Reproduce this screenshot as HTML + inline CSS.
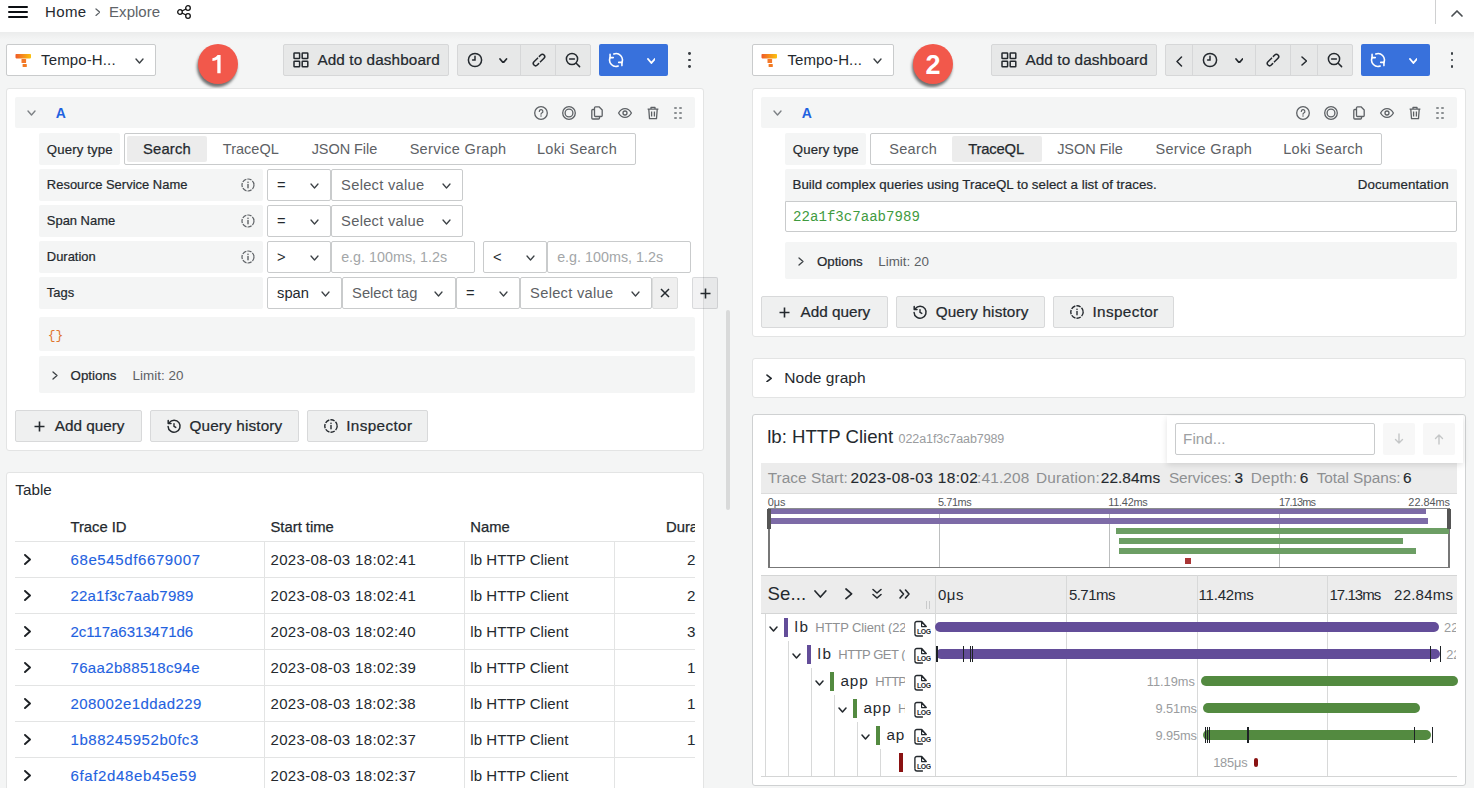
<!DOCTYPE html><html><head><meta charset="utf-8"><style>
html,body{margin:0;padding:0;}
body{width:1474px;height:788px;overflow:hidden;position:relative;background:#f4f5f5;font-family:"Liberation Sans",sans-serif;}
body>div,body>svg{position:absolute;box-sizing:border-box;white-space:nowrap;}
</style></head><body>
<div style="left:0px;top:0px;width:1474px;height:32px;background:#fff"></div>
<div style="left:0px;top:32px;width:1474px;height:8px;background:linear-gradient(rgba(0,0,0,0.035),rgba(0,0,0,0))"></div>
<div style="left:8px;top:6px;width:20px;height:2px;background:#0c0f13;border-radius:1px"></div>
<div style="left:8px;top:11px;width:20px;height:2px;background:#0c0f13;border-radius:1px"></div>
<div style="left:8px;top:16px;width:20px;height:2px;background:#0c0f13;border-radius:1px"></div>
<div style="top:4.16px;font:15px/1 'Liberation Sans',sans-serif;color:#24292e;letter-spacing:0.333px;left:45.10px;">Home</div>
<svg style="left:94.6px;top:7.800000000000001px;" width="5.8" height="8.4" viewBox="0 0 5.8 8.4" fill="none"><path d="M1 1 L4.8 4.2 L1 7.4" stroke="#5e6368" stroke-width="1.3" stroke-linecap="round" stroke-linejoin="round"/></svg>
<div style="top:4.16px;font:15px/1 'Liberation Sans',sans-serif;color:#5e6368;letter-spacing:0.021px;left:109.10px;">Explore</div>
<svg style="left:176px;top:4px;" width="16" height="16" viewBox="0 0 16 16" fill="none"><circle cx="4" cy="8" r="2.3" stroke="#111" stroke-width="1.3"/><circle cx="12" cy="4" r="2.3" stroke="#111" stroke-width="1.3"/><circle cx="12" cy="12" r="2.3" stroke="#111" stroke-width="1.3"/><path d="M6 7 L10 5 M6 9 L10 11" stroke="#111" stroke-width="1.3"/></svg>
<div style="left:1435px;top:0px;width:1px;height:24px;background:#cfd0d1"></div>
<svg style="left:1450px;top:8px;" width="14" height="10" viewBox="0 0 14 10" fill="none"><path d="M2 8 L7 3 L12 8" stroke="#4a4e52" stroke-width="1.7" stroke-linecap="round" stroke-linejoin="round"/></svg>
<div style="left:6px;top:44px;width:150px;height:32px;background:#fff;border:1px solid #c9cbcc;border-radius:2px"></div>
<svg style="left:15px;top:54px;" width="17" height="14" viewBox="0 0 17 14" fill="none"><defs><linearGradient id="tg" x1="0" x2="1"><stop offset="0" stop-color="#f05a28"/><stop offset="1" stop-color="#fbc20e"/></linearGradient></defs><rect x="0.5" y="0" width="15.5" height="4.4" rx="0.8" fill="url(#tg)"/><rect x="6.5" y="5" width="4.6" height="4" rx="0.6" fill="#f3782a"/><rect x="7.6" y="9.9" width="4.2" height="3.2" rx="0.6" fill="#f27a22"/></svg>
<div style="top:52.16px;font:15px/1 'Liberation Sans',sans-serif;color:#24292e;letter-spacing:0.122px;left:41.10px;">Tempo-H...</div>
<svg style="left:134.5px;top:58.0px;" width="9" height="6" viewBox="0 0 9 6" fill="none"><path d="M1 1 L4.5 5 L8 1" stroke="#3d4246" stroke-width="1.4" stroke-linecap="round" stroke-linejoin="round"/></svg>
<div style="left:198px;top:44px;width:40px;height:40px;background:#f2584b;border-radius:50%;box-shadow:-1px 3px 3px rgba(0,0,0,0.55)"></div>
<svg style="left:210px;top:54px;" width="16" height="20" viewBox="0 0 16 20" fill="none"><path d="M2.6 5.2 L8.2 1.6 H10.4 V19" stroke="#fff" stroke-width="0" fill="none"/><path d="M2.4 4.2 C5 3.6 6.6 2.6 7.6 1 H10.6 V19.2 H7.3 V5.6 C6 6.4 4.4 6.9 2.4 7.1 Z" fill="#fff"/></svg>
<div style="left:283px;top:44px;width:166px;height:32px;background:#e7e8e8;border:1px solid #d6d7d8;border-radius:2px"></div>
<svg style="left:292.5px;top:52px;" width="16" height="16" viewBox="0 0 16 16" fill="none"><rect x="1" y="1" width="5.6" height="5.6" rx="0.6" stroke="#24292e" stroke-width="1.5"/><rect x="1" y="9.2" width="5.6" height="5.6" rx="0.6" stroke="#24292e" stroke-width="1.5"/><rect x="9.2" y="1" width="5.6" height="5.6" rx="0.6" stroke="#24292e" stroke-width="1.5"/><rect x="9.2" y="9.2" width="5.6" height="5.6" rx="0.6" stroke="#24292e" stroke-width="1.5"/></svg>
<div style="top:52.26px;font:15.3px/1 'Liberation Sans',sans-serif;color:#24292e;letter-spacing:0.097px;-webkit-text-stroke:0.22px #24292e;left:317.48px;">Add to dashboard</div>
<div style="left:457px;top:44px;width:134px;height:32px;background:#e7e8e8;border:1px solid #d6d7d8;border-radius:2px"></div>
<div style="left:520px;top:45px;width:1px;height:30px;background:#d6d7d8"></div>
<div style="left:555px;top:45px;width:1px;height:30px;background:#d6d7d8"></div>
<svg style="left:467px;top:52px;" width="16" height="16" viewBox="0 0 16 16" fill="none"><circle cx="8" cy="8" r="6.6" stroke="#24292e" stroke-width="1.5"/><path d="M8 4.2 V8 H5.6" stroke="#24292e" stroke-width="1.5" stroke-linecap="round"/></svg>
<svg style="left:499.25px;top:57.6px;" width="8.5" height="5.8" viewBox="0 0 8.5 5.8" fill="none"><path d="M1 1 L4.25 4.8 L7.5 1" stroke="#24292e" stroke-width="1.7" stroke-linecap="round" stroke-linejoin="round"/></svg>
<svg style="left:530.5px;top:52px;" width="16" height="16" viewBox="0 0 16 16" fill="none"><g transform="rotate(-45 8 8)"><path d="M8.3 5.7 H3.2 a2.3 2.3 0 0 0 0 4.6 H5.2" stroke="#24292e" stroke-width="1.5" stroke-linecap="round"/><path d="M7.7 10.3 H12.8 a2.3 2.3 0 0 0 0 -4.6 H10.8" stroke="#24292e" stroke-width="1.5" stroke-linecap="round"/></g></svg>
<svg style="left:565px;top:52px;" width="16" height="16" viewBox="0 0 16 16" fill="none"><circle cx="7" cy="7" r="5.6" stroke="#24292e" stroke-width="1.5"/><path d="M4.6 7 H9.4 M11.2 11.2 L14.6 14.6" stroke="#24292e" stroke-width="1.5" stroke-linecap="round"/></svg>
<div style="left:599px;top:44px;width:69px;height:32px;background:#3871dc;border-radius:2px"></div>
<svg style="left:608px;top:52px;" width="16" height="16" viewBox="0 0 16 16" fill="none"><path d="M5.81 1.99 A6.4 6.4 0 0 1 13.93 10.4" stroke="#fff" stroke-width="1.6" stroke-linecap="round"/><path d="M10.19 14.01 A6.4 6.4 0 0 1 2.07 5.6" stroke="#fff" stroke-width="1.6" stroke-linecap="round"/><path d="M2.07 2.3999999999999995 V5.6 H5.27" stroke="#fff" stroke-width="1.6" stroke-linecap="round" stroke-linejoin="round"/><path d="M13.93 13.600000000000001 V10.4 H10.73" stroke="#fff" stroke-width="1.6" stroke-linecap="round" stroke-linejoin="round"/></svg>
<svg style="left:646.6px;top:57.5px;" width="8.8" height="6" viewBox="0 0 8.8 6" fill="none"><path d="M1 1 L4.4 5 L7.8 1" stroke="#fff" stroke-width="1.9" stroke-linecap="round" stroke-linejoin="round"/></svg>
<div style="left:688.1px;top:52.1px;width:2.8px;height:2.8px;background:#3a3f44;border-radius:50%"></div>
<div style="left:688.1px;top:58.6px;width:2.8px;height:2.8px;background:#3a3f44;border-radius:50%"></div>
<div style="left:688.1px;top:65.1px;width:2.8px;height:2.8px;background:#3a3f44;border-radius:50%"></div>
<div style="left:752px;top:44px;width:142px;height:32px;background:#fff;border:1px solid #c9cbcc;border-radius:2px"></div>
<svg style="left:761px;top:54px;" width="17" height="14" viewBox="0 0 17 14" fill="none"><defs><linearGradient id="tg" x1="0" x2="1"><stop offset="0" stop-color="#f05a28"/><stop offset="1" stop-color="#fbc20e"/></linearGradient></defs><rect x="0.5" y="0" width="15.5" height="4.4" rx="0.8" fill="url(#tg)"/><rect x="6.5" y="5" width="4.6" height="4" rx="0.6" fill="#f3782a"/><rect x="7.6" y="9.9" width="4.2" height="3.2" rx="0.6" fill="#f27a22"/></svg>
<div style="top:52.16px;font:15px/1 'Liberation Sans',sans-serif;color:#24292e;letter-spacing:0.122px;left:787.40px;">Tempo-H...</div>
<svg style="left:873.0px;top:58.0px;" width="9" height="6" viewBox="0 0 9 6" fill="none"><path d="M1 1 L4.5 5 L8 1" stroke="#3d4246" stroke-width="1.4" stroke-linecap="round" stroke-linejoin="round"/></svg>
<div style="left:913px;top:44px;width:40px;height:40px;background:#f2584b;border-radius:50%;box-shadow:-1px 3px 3px rgba(0,0,0,0.55)"></div>
<div style="top:51.79px;font:bold 27px/1 'Liberation Sans',sans-serif;color:#fff;left:925.38px;left:913px;width:40px;text-align:center;">2</div>
<div style="left:991px;top:44px;width:166px;height:32px;background:#e7e8e8;border:1px solid #d6d7d8;border-radius:2px"></div>
<svg style="left:1000.5px;top:52px;" width="16" height="16" viewBox="0 0 16 16" fill="none"><rect x="1" y="1" width="5.6" height="5.6" rx="0.6" stroke="#24292e" stroke-width="1.5"/><rect x="1" y="9.2" width="5.6" height="5.6" rx="0.6" stroke="#24292e" stroke-width="1.5"/><rect x="9.2" y="1" width="5.6" height="5.6" rx="0.6" stroke="#24292e" stroke-width="1.5"/><rect x="9.2" y="9.2" width="5.6" height="5.6" rx="0.6" stroke="#24292e" stroke-width="1.5"/></svg>
<div style="top:52.26px;font:15.3px/1 'Liberation Sans',sans-serif;color:#24292e;letter-spacing:0.097px;-webkit-text-stroke:0.22px #24292e;left:1025.48px;">Add to dashboard</div>
<div style="left:1165px;top:44px;width:188px;height:32px;background:#e7e8e8;border:1px solid #d6d7d8;border-radius:2px"></div>
<div style="left:1192px;top:45px;width:1px;height:30px;background:#d6d7d8"></div>
<div style="left:1255px;top:45px;width:1px;height:30px;background:#d6d7d8"></div>
<div style="left:1290px;top:45px;width:1px;height:30px;background:#d6d7d8"></div>
<div style="left:1317px;top:45px;width:1px;height:30px;background:#d6d7d8"></div>
<svg style="left:1176.3px;top:55.5px;" width="7" height="11" viewBox="0 0 7 11" fill="none"><path d="M5.5 1 L1 5.5 L5.5 10" stroke="#24292e" stroke-width="1.5" stroke-linecap="round" stroke-linejoin="round"/></svg>
<svg style="left:1202px;top:52px;" width="16" height="16" viewBox="0 0 16 16" fill="none"><circle cx="8" cy="8" r="6.6" stroke="#24292e" stroke-width="1.5"/><path d="M8 4.2 V8 H5.6" stroke="#24292e" stroke-width="1.5" stroke-linecap="round"/></svg>
<svg style="left:1234.75px;top:57.6px;" width="8.5" height="5.8" viewBox="0 0 8.5 5.8" fill="none"><path d="M1 1 L4.25 4.8 L7.5 1" stroke="#24292e" stroke-width="1.7" stroke-linecap="round" stroke-linejoin="round"/></svg>
<svg style="left:1265px;top:52px;" width="16" height="16" viewBox="0 0 16 16" fill="none"><g transform="rotate(-45 8 8)"><path d="M8.3 5.7 H3.2 a2.3 2.3 0 0 0 0 4.6 H5.2" stroke="#24292e" stroke-width="1.5" stroke-linecap="round"/><path d="M7.7 10.3 H12.8 a2.3 2.3 0 0 0 0 -4.6 H10.8" stroke="#24292e" stroke-width="1.5" stroke-linecap="round"/></g></svg>
<svg style="left:1300.55px;top:55.5px;" width="6.5" height="10" viewBox="0 0 6.5 10" fill="none"><path d="M1 1 L5.5 5.0 L1 9" stroke="#24292e" stroke-width="1.5" stroke-linecap="round" stroke-linejoin="round"/></svg>
<svg style="left:1327px;top:52px;" width="16" height="16" viewBox="0 0 16 16" fill="none"><circle cx="7" cy="7" r="5.6" stroke="#24292e" stroke-width="1.5"/><path d="M4.6 7 H9.4 M11.2 11.2 L14.6 14.6" stroke="#24292e" stroke-width="1.5" stroke-linecap="round"/></svg>
<div style="left:1361px;top:44px;width:69px;height:32px;background:#3871dc;border-radius:2px"></div>
<svg style="left:1370px;top:52px;" width="16" height="16" viewBox="0 0 16 16" fill="none"><path d="M5.81 1.99 A6.4 6.4 0 0 1 13.93 10.4" stroke="#fff" stroke-width="1.6" stroke-linecap="round"/><path d="M10.19 14.01 A6.4 6.4 0 0 1 2.07 5.6" stroke="#fff" stroke-width="1.6" stroke-linecap="round"/><path d="M2.07 2.3999999999999995 V5.6 H5.27" stroke="#fff" stroke-width="1.6" stroke-linecap="round" stroke-linejoin="round"/><path d="M13.93 13.600000000000001 V10.4 H10.73" stroke="#fff" stroke-width="1.6" stroke-linecap="round" stroke-linejoin="round"/></svg>
<svg style="left:1408.6px;top:57.5px;" width="8.8" height="6" viewBox="0 0 8.8 6" fill="none"><path d="M1 1 L4.4 5 L7.8 1" stroke="#fff" stroke-width="1.9" stroke-linecap="round" stroke-linejoin="round"/></svg>
<div style="left:1450.6px;top:52.1px;width:2.8px;height:2.8px;background:#3a3f44;border-radius:50%"></div>
<div style="left:1450.6px;top:58.6px;width:2.8px;height:2.8px;background:#3a3f44;border-radius:50%"></div>
<div style="left:1450.6px;top:65.1px;width:2.8px;height:2.8px;background:#3a3f44;border-radius:50%"></div>
<div style="left:6px;top:88px;width:698px;height:363px;background:#fff;border:1px solid #e3e4e4;border-radius:3px"></div>
<div style="left:15px;top:97px;width:680px;height:31px;background:#f4f5f5;border-radius:2px"></div>
<svg style="left:26.7px;top:110.2px;" width="9" height="6" viewBox="0 0 9 6" fill="none"><path d="M1 1 L4.5 5 L8 1" stroke="#7d8185" stroke-width="1.4" stroke-linecap="round" stroke-linejoin="round"/></svg>
<div style="top:105.82px;font:bold 14px/1 'Liberation Sans',sans-serif;color:#1f62e0;left:55.66px;">A</div>
<svg style="left:533px;top:105px;" width="16" height="16" viewBox="0 0 16 16" fill="none"><circle cx="8" cy="8" r="6.3" stroke="#5d6165" stroke-width="1.3"/><path d="M6.3 6.4 a1.8 1.8 0 1 1 2.5 1.6 c-0.6 0.3 -0.8 0.6 -0.8 1.2" stroke="#5d6165" stroke-width="1.2" stroke-linecap="round"/><circle cx="8" cy="11" r="0.75" fill="#5d6165"/></svg>
<svg style="left:561px;top:105px;" width="16" height="16" viewBox="0 0 16 16" fill="none"><circle cx="8" cy="8" r="6.3" stroke="#5d6165" stroke-width="1.3"/><circle cx="8" cy="8" r="3.9" stroke="#5d6165" stroke-width="1.3"/></svg>
<svg style="left:589px;top:105px;" width="16" height="16" viewBox="0 0 16 16" fill="none"><path d="M5.5 4.5 H3.8 a1 1 0 0 0 -1 1 V13 a1 1 0 0 0 1 1 H9.5 a1 1 0 0 0 1 -1 V11.5" stroke="#5d6165" stroke-width="1.3" stroke-linejoin="round"/><path d="M5.5 2.8 a1 1 0 0 1 1 -1 H10 L13.2 5 V10.5 a1 1 0 0 1 -1 1 H6.5 a1 1 0 0 1 -1 -1 Z" stroke="#5d6165" stroke-width="1.3" stroke-linejoin="round"/></svg>
<svg style="left:617px;top:105px;" width="16" height="16" viewBox="0 0 16 16" fill="none"><path d="M1.6 8 C3.4 4.6 5.6 3.6 8 3.6 C10.4 3.6 12.6 4.6 14.4 8 C12.6 11.4 10.4 12.4 8 12.4 C5.6 12.4 3.4 11.4 1.6 8 Z" stroke="#5d6165" stroke-width="1.3"/><circle cx="8" cy="8" r="2" stroke="#5d6165" stroke-width="1.3"/></svg>
<svg style="left:645px;top:105px;" width="16" height="16" viewBox="0 0 16 16" fill="none"><path d="M2.6 4.2 H13.4 M6 4 V2.4 H10 V4 M3.8 4.4 L4.5 13.6 H11.5 L12.2 4.4 M6.6 6.6 V11.6 M9.4 6.6 V11.6" stroke="#5d6165" stroke-width="1.3" stroke-linejoin="round"/></svg>
<div style="left:674.0px;top:106.6px;width:2.8px;height:2.8px;background:#8a8e91;border-radius:50%"></div>
<div style="left:674.0px;top:111.6px;width:2.8px;height:2.8px;background:#8a8e91;border-radius:50%"></div>
<div style="left:674.0px;top:116.6px;width:2.8px;height:2.8px;background:#8a8e91;border-radius:50%"></div>
<div style="left:679.2px;top:106.6px;width:2.8px;height:2.8px;background:#8a8e91;border-radius:50%"></div>
<div style="left:679.2px;top:111.6px;width:2.8px;height:2.8px;background:#8a8e91;border-radius:50%"></div>
<div style="left:679.2px;top:116.6px;width:2.8px;height:2.8px;background:#8a8e91;border-radius:50%"></div>
<div style="left:39px;top:133px;width:81px;height:32px;background:#f4f5f5;border-radius:2px"></div>
<div style="top:142.54px;font:13.2px/1 'Liberation Sans',sans-serif;color:#24292e;letter-spacing:0.136px;-webkit-text-stroke:0.22px #24292e;left:46.81px;">Query type</div>
<div style="left:124px;top:133px;width:512px;height:32px;background:#fff;border:1px solid #c9cbcc;border-radius:2px"></div>
<div style="left:127px;top:136px;width:80px;height:26px;background:#ececec;border-radius:2px"></div>
<div style="top:142.09px;font:14.8px/1 'Liberation Sans',sans-serif;color:#24292e;letter-spacing:0.14px;-webkit-text-stroke:0.25px #24292e;left:143.11px;">Search</div>
<div style="top:141.99px;font:14.5px/1 'Liberation Sans',sans-serif;color:#5d6165;letter-spacing:0.017px;left:222.83px;">TraceQL</div>
<div style="top:141.99px;font:14.5px/1 'Liberation Sans',sans-serif;color:#5d6165;letter-spacing:-0.053px;left:311.63px;">JSON File</div>
<div style="top:141.99px;font:14.5px/1 'Liberation Sans',sans-serif;color:#5d6165;letter-spacing:0.317px;left:409.63px;">Service Graph</div>
<div style="top:141.99px;font:14.5px/1 'Liberation Sans',sans-serif;color:#5d6165;letter-spacing:0.322px;left:536.93px;">Loki Search</div>
<div style="left:39px;top:169px;width:224px;height:32px;background:#f4f5f5;border-radius:2px"></div>
<div style="top:179.45px;font:12.95px/1 'Liberation Sans',sans-serif;color:#24292e;letter-spacing:0.021px;-webkit-text-stroke:0.22px #24292e;left:46.82px;">Resource Service Name</div>
<svg style="left:240px;top:177.0px;" width="16" height="16" viewBox="0 0 16 16" fill="none"><circle cx="8" cy="8" r="6" stroke="#5d6165" stroke-width="1.2" stroke-dasharray="4.306285714285714 1.0765714285714285"/><path d="M8 7.4 V10.8" stroke="#5d6165" stroke-width="1.4" stroke-linecap="round"/><circle cx="8" cy="5.3" r="0.8" fill="#5d6165"/></svg>
<div style="left:39px;top:205px;width:224px;height:32px;background:#f4f5f5;border-radius:2px"></div>
<div style="top:215.45px;font:12.95px/1 'Liberation Sans',sans-serif;color:#24292e;-webkit-text-stroke:0.22px #24292e;left:46.82px;">Span Name</div>
<svg style="left:240px;top:213.0px;" width="16" height="16" viewBox="0 0 16 16" fill="none"><circle cx="8" cy="8" r="6" stroke="#5d6165" stroke-width="1.2" stroke-dasharray="4.306285714285714 1.0765714285714285"/><path d="M8 7.4 V10.8" stroke="#5d6165" stroke-width="1.4" stroke-linecap="round"/><circle cx="8" cy="5.3" r="0.8" fill="#5d6165"/></svg>
<div style="left:39px;top:241px;width:224px;height:32px;background:#f4f5f5;border-radius:2px"></div>
<div style="top:251.45px;font:12.95px/1 'Liberation Sans',sans-serif;color:#24292e;-webkit-text-stroke:0.22px #24292e;left:46.82px;">Duration</div>
<svg style="left:240px;top:249.0px;" width="16" height="16" viewBox="0 0 16 16" fill="none"><circle cx="8" cy="8" r="6" stroke="#5d6165" stroke-width="1.2" stroke-dasharray="4.306285714285714 1.0765714285714285"/><path d="M8 7.4 V10.8" stroke="#5d6165" stroke-width="1.4" stroke-linecap="round"/><circle cx="8" cy="5.3" r="0.8" fill="#5d6165"/></svg>
<div style="left:39px;top:277px;width:224px;height:32px;background:#f4f5f5;border-radius:2px"></div>
<div style="top:287.45px;font:12.95px/1 'Liberation Sans',sans-serif;color:#24292e;-webkit-text-stroke:0.22px #24292e;left:46.82px;">Tags</div>
<div style="left:267px;top:169px;width:64px;height:32px;background:#fff;border:1px solid #c9cbcc;border-radius:2px"></div>
<div style="top:178.06px;font:14.7px/1 'Liberation Sans',sans-serif;color:#24292e;left:277.12px;">=</div>
<svg style="left:309.7px;top:182.5px;" width="9" height="6" viewBox="0 0 9 6" fill="none"><path d="M1 1 L4.5 5 L8 1" stroke="#3d4246" stroke-width="1.3" stroke-linecap="round" stroke-linejoin="round"/></svg>
<div style="left:331px;top:169px;width:132px;height:32px;background:#fff;border:1px solid #c9cbcc;border-radius:2px"></div>
<div style="top:178.06px;font:14.7px/1 'Liberation Sans',sans-serif;color:#5d6165;letter-spacing:0.277px;left:341.12px;">Select value</div>
<svg style="left:441.5px;top:182.5px;" width="9" height="6" viewBox="0 0 9 6" fill="none"><path d="M1 1 L4.5 5 L8 1" stroke="#3d4246" stroke-width="1.3" stroke-linecap="round" stroke-linejoin="round"/></svg>
<div style="left:267px;top:205px;width:64px;height:32px;background:#fff;border:1px solid #c9cbcc;border-radius:2px"></div>
<div style="top:214.06px;font:14.7px/1 'Liberation Sans',sans-serif;color:#24292e;left:277.12px;">=</div>
<svg style="left:309.7px;top:218.5px;" width="9" height="6" viewBox="0 0 9 6" fill="none"><path d="M1 1 L4.5 5 L8 1" stroke="#3d4246" stroke-width="1.3" stroke-linecap="round" stroke-linejoin="round"/></svg>
<div style="left:331px;top:205px;width:132px;height:32px;background:#fff;border:1px solid #c9cbcc;border-radius:2px"></div>
<div style="top:214.06px;font:14.7px/1 'Liberation Sans',sans-serif;color:#5d6165;letter-spacing:0.277px;left:341.12px;">Select value</div>
<svg style="left:441.5px;top:218.5px;" width="9" height="6" viewBox="0 0 9 6" fill="none"><path d="M1 1 L4.5 5 L8 1" stroke="#3d4246" stroke-width="1.3" stroke-linecap="round" stroke-linejoin="round"/></svg>
<div style="left:267px;top:241px;width:64px;height:32px;background:#fff;border:1px solid #c9cbcc;border-radius:2px"></div>
<div style="top:250.06px;font:14.7px/1 'Liberation Sans',sans-serif;color:#24292e;left:277.12px;">&gt;</div>
<svg style="left:309.7px;top:254.5px;" width="9" height="6" viewBox="0 0 9 6" fill="none"><path d="M1 1 L4.5 5 L8 1" stroke="#3d4246" stroke-width="1.3" stroke-linecap="round" stroke-linejoin="round"/></svg>
<div style="left:331px;top:241px;width:144px;height:32px;background:#fff;border:1px solid #c9cbcc;border-radius:2px"></div>
<div style="top:249.92px;font:14.3px/1 'Liberation Sans',sans-serif;color:#a3a6a8;letter-spacing:0.025px;left:341.14px;">e.g. 100ms, 1.2s</div>
<div style="left:483px;top:241px;width:64px;height:32px;background:#fff;border:1px solid #c9cbcc;border-radius:2px"></div>
<div style="top:250.06px;font:14.7px/1 'Liberation Sans',sans-serif;color:#24292e;left:493.12px;">&lt;</div>
<svg style="left:525.5px;top:254.5px;" width="9" height="6" viewBox="0 0 9 6" fill="none"><path d="M1 1 L4.5 5 L8 1" stroke="#3d4246" stroke-width="1.3" stroke-linecap="round" stroke-linejoin="round"/></svg>
<div style="left:547px;top:241px;width:144px;height:32px;background:#fff;border:1px solid #c9cbcc;border-radius:2px"></div>
<div style="top:249.92px;font:14.3px/1 'Liberation Sans',sans-serif;color:#a3a6a8;letter-spacing:0.025px;left:557.14px;">e.g. 100ms, 1.2s</div>
<div style="left:267px;top:277px;width:75px;height:32px;background:#fff;border:1px solid #c9cbcc;border-radius:2px"></div>
<div style="top:286.06px;font:14.7px/1 'Liberation Sans',sans-serif;color:#24292e;left:277.12px;">span</div>
<svg style="left:320.5px;top:290.5px;" width="9" height="6" viewBox="0 0 9 6" fill="none"><path d="M1 1 L4.5 5 L8 1" stroke="#3d4246" stroke-width="1.3" stroke-linecap="round" stroke-linejoin="round"/></svg>
<div style="left:342px;top:277px;width:114px;height:32px;background:#fff;border:1px solid #c9cbcc;border-radius:2px"></div>
<div style="top:286.06px;font:14.7px/1 'Liberation Sans',sans-serif;color:#5d6165;left:352.12px;">Select tag</div>
<svg style="left:434.0px;top:290.5px;" width="9" height="6" viewBox="0 0 9 6" fill="none"><path d="M1 1 L4.5 5 L8 1" stroke="#3d4246" stroke-width="1.3" stroke-linecap="round" stroke-linejoin="round"/></svg>
<div style="left:456px;top:277px;width:64px;height:32px;background:#fff;border:1px solid #c9cbcc;border-radius:2px"></div>
<div style="top:286.06px;font:14.7px/1 'Liberation Sans',sans-serif;color:#24292e;left:466.12px;">=</div>
<svg style="left:498.5px;top:290.5px;" width="9" height="6" viewBox="0 0 9 6" fill="none"><path d="M1 1 L4.5 5 L8 1" stroke="#3d4246" stroke-width="1.3" stroke-linecap="round" stroke-linejoin="round"/></svg>
<div style="left:520px;top:277px;width:132px;height:32px;background:#fff;border:1px solid #c9cbcc;border-radius:2px"></div>
<div style="top:286.06px;font:14.7px/1 'Liberation Sans',sans-serif;color:#5d6165;letter-spacing:0.277px;left:530.12px;">Select value</div>
<svg style="left:630.5px;top:290.5px;" width="9" height="6" viewBox="0 0 9 6" fill="none"><path d="M1 1 L4.5 5 L8 1" stroke="#3d4246" stroke-width="1.3" stroke-linecap="round" stroke-linejoin="round"/></svg>
<div style="left:652px;top:277px;width:26px;height:32px;background:#efefef;border:1px solid #dcdddd;border-radius:2px"></div>
<svg style="left:659px;top:287px;" width="12" height="12" viewBox="0 0 12 12" fill="none"><path d="M2 2 L10 10 M10 2 L2 10" stroke="#24292e" stroke-width="1.5"/></svg>
<div style="left:692px;top:277px;width:26px;height:32px;background:rgba(36,41,46,0.06);border:1px solid rgba(36,41,46,0.12);border-radius:2px"></div>
<svg style="left:699.5px;top:287.5px;" width="11" height="11" viewBox="0 0 11 11" fill="none"><path d="M5.5 0.5 V10.5 M0.5 5.5 H10.5" stroke="#24292e" stroke-width="1.6"/></svg>
<div style="left:39px;top:317px;width:656px;height:34px;background:#f4f5f5;border-radius:2px"></div>
<div style="top:329.29px;font:13px/1 'Liberation Mono',monospace;color:#e0752d;left:47.72px;">{}</div>
<div style="left:39px;top:356px;width:656px;height:37px;background:#f4f5f5;border-radius:2px"></div>
<svg style="left:51.8px;top:371.2px;" width="6" height="9" viewBox="0 0 6 9" fill="none"><path d="M1 1 L5 4.5 L1 8" stroke="#3d4246" stroke-width="1.3" stroke-linecap="round" stroke-linejoin="round"/></svg>
<div style="top:369.08px;font:13.3px/1 'Liberation Sans',sans-serif;color:#24292e;letter-spacing:0.004px;-webkit-text-stroke:0.22px #24292e;left:70.60px;">Options</div>
<div style="top:369.11px;font:13.4px/1 'Liberation Sans',sans-serif;color:#5d6165;letter-spacing:0.028px;left:132.50px;">Limit: 20</div>
<div style="left:15px;top:410px;width:127px;height:32px;background:#eff0f0;border:1px solid #d8d9da;border-radius:2px"></div>
<svg style="left:33.7px;top:420.5px;" width="11" height="11" viewBox="0 0 11 11" fill="none"><path d="M5.5 0.5 V10.5 M0.5 5.5 H10.5" stroke="#24292e" stroke-width="1.6"/></svg>
<div style="top:418.26px;font:15.3px/1 'Liberation Sans',sans-serif;color:#24292e;letter-spacing:0.003px;-webkit-text-stroke:0.22px #24292e;left:54.68px;">Add query</div>
<div style="left:150px;top:410px;width:149px;height:32px;background:#eff0f0;border:1px solid #d8d9da;border-radius:2px"></div>
<svg style="left:166px;top:418px;" width="16" height="16" viewBox="0 0 16 16" fill="none"><path d="M3.3 4.6 A6 6 0 1 1 2.1 8.4" stroke="#24292e" stroke-width="1.5" stroke-linecap="round"/><path d="M2.2 2.6 V5.4 H5" stroke="#24292e" stroke-width="1.5" stroke-linecap="round" stroke-linejoin="round"/><path d="M8 5.6 V8.3 L9.8 9.4" stroke="#24292e" stroke-width="1.4" stroke-linecap="round"/></svg>
<div style="top:418.26px;font:15.3px/1 'Liberation Sans',sans-serif;color:#24292e;letter-spacing:0.146px;-webkit-text-stroke:0.22px #24292e;left:189.48px;">Query history</div>
<div style="left:307px;top:410px;width:121px;height:32px;background:#eff0f0;border:1px solid #d8d9da;border-radius:2px"></div>
<svg style="left:322.6px;top:418px;" width="16" height="16" viewBox="0 0 16 16" fill="none"><circle cx="8" cy="8" r="6.2" stroke="#24292e" stroke-width="1.4" stroke-dasharray="4.449828571428571 1.1124571428571428"/><path d="M8 7.4 V10.8" stroke="#24292e" stroke-width="1.4" stroke-linecap="round"/><circle cx="8" cy="5.3" r="0.8" fill="#24292e"/></svg>
<div style="top:418.26px;font:15.3px/1 'Liberation Sans',sans-serif;color:#24292e;letter-spacing:0.35px;-webkit-text-stroke:0.22px #24292e;left:346.28px;">Inspector</div>
<div style="left:6px;top:472px;width:698px;height:340px;background:#fff;border:1px solid #e3e4e4;border-radius:3px"></div>
<div style="top:481.53px;font:15.2px/1 'Liberation Sans',sans-serif;color:#24292e;letter-spacing:0.05px;left:15.29px;">Table</div>
<div style="top:519.89px;font:14.8px/1 'Liberation Sans',sans-serif;color:#24292e;letter-spacing:-0.029px;-webkit-text-stroke:0.25px #24292e;left:70.51px;">Trace ID</div>
<div style="top:519.89px;font:14.8px/1 'Liberation Sans',sans-serif;color:#24292e;-webkit-text-stroke:0.25px #24292e;left:270.51px;">Start time</div>
<div style="top:519.89px;font:14.8px/1 'Liberation Sans',sans-serif;color:#24292e;-webkit-text-stroke:0.25px #24292e;left:470.31px;">Name</div>
<div style="top:519.89px;font:14.8px/1 'Liberation Sans',sans-serif;color:#24292e;-webkit-text-stroke:0.25px #24292e;left:-0.89px;left:666px;width:29px;overflow:hidden;">Dura</div>
<div style="left:15px;top:541px;width:680px;height:1px;background:#e3e4e4"></div>
<div style="left:264px;top:541px;width:1px;height:260px;background:#e3e4e4"></div>
<div style="left:464px;top:541px;width:1px;height:260px;background:#e3e4e4"></div>
<div style="left:614px;top:541px;width:1px;height:260px;background:#e3e4e4"></div>
<div style="left:15px;top:577px;width:680px;height:1px;background:#e3e4e4"></div>
<svg style="left:23.6px;top:554.0px;" width="7" height="11" viewBox="0 0 7 11" fill="none"><path d="M1 1 L6 5.5 L1 10" stroke="#1d2125" stroke-width="1.9" stroke-linecap="round" stroke-linejoin="round"/></svg>
<div style="top:551.66px;font:15px/1 'Liberation Sans',sans-serif;color:#1f62e0;letter-spacing:0.616px;-webkit-text-stroke:0.12px #1f62e0;left:70.50px;">68e545df6679007</div>
<div style="top:551.66px;font:15.0px/1 'Liberation Sans',sans-serif;color:#24292e;letter-spacing:0.331px;left:270.50px;">2023-08-03 18:02:41</div>
<div style="top:551.66px;font:15px/1 'Liberation Sans',sans-serif;color:#24292e;letter-spacing:0.06px;left:470.30px;">lb HTTP Client</div>
<div style="top:551.73px;font:15.2px/1 'Liberation Sans',sans-serif;color:#24292e;left:95.5px;width:600px;text-align:right;">2</div>
<div style="left:15px;top:613px;width:680px;height:1px;background:#e3e4e4"></div>
<svg style="left:23.6px;top:590.0px;" width="7" height="11" viewBox="0 0 7 11" fill="none"><path d="M1 1 L6 5.5 L1 10" stroke="#1d2125" stroke-width="1.9" stroke-linecap="round" stroke-linejoin="round"/></svg>
<div style="top:587.66px;font:15px/1 'Liberation Sans',sans-serif;color:#1f62e0;letter-spacing:0.193px;-webkit-text-stroke:0.12px #1f62e0;left:70.50px;">22a1f3c7aab7989</div>
<div style="top:587.66px;font:15.0px/1 'Liberation Sans',sans-serif;color:#24292e;letter-spacing:0.331px;left:270.50px;">2023-08-03 18:02:41</div>
<div style="top:587.66px;font:15px/1 'Liberation Sans',sans-serif;color:#24292e;letter-spacing:0.06px;left:470.30px;">lb HTTP Client</div>
<div style="top:587.73px;font:15.2px/1 'Liberation Sans',sans-serif;color:#24292e;left:95.5px;width:600px;text-align:right;">2</div>
<div style="left:15px;top:649px;width:680px;height:1px;background:#e3e4e4"></div>
<svg style="left:23.6px;top:626.0px;" width="7" height="11" viewBox="0 0 7 11" fill="none"><path d="M1 1 L6 5.5 L1 10" stroke="#1d2125" stroke-width="1.9" stroke-linecap="round" stroke-linejoin="round"/></svg>
<div style="top:623.66px;font:15px/1 'Liberation Sans',sans-serif;color:#1f62e0;letter-spacing:-0.039px;-webkit-text-stroke:0.12px #1f62e0;left:70.50px;">2c117a6313471d6</div>
<div style="top:623.66px;font:15.0px/1 'Liberation Sans',sans-serif;color:#24292e;letter-spacing:0.324px;left:270.50px;">2023-08-03 18:02:40</div>
<div style="top:623.66px;font:15px/1 'Liberation Sans',sans-serif;color:#24292e;letter-spacing:0.06px;left:470.30px;">lb HTTP Client</div>
<div style="top:623.73px;font:15.2px/1 'Liberation Sans',sans-serif;color:#24292e;left:95.5px;width:600px;text-align:right;">3</div>
<div style="left:15px;top:685px;width:680px;height:1px;background:#e3e4e4"></div>
<svg style="left:23.6px;top:662.0px;" width="7" height="11" viewBox="0 0 7 11" fill="none"><path d="M1 1 L6 5.5 L1 10" stroke="#1d2125" stroke-width="1.9" stroke-linecap="round" stroke-linejoin="round"/></svg>
<div style="top:659.66px;font:15px/1 'Liberation Sans',sans-serif;color:#1f62e0;letter-spacing:0.338px;-webkit-text-stroke:0.12px #1f62e0;left:70.50px;">76aa2b88518c94e</div>
<div style="top:659.66px;font:15.0px/1 'Liberation Sans',sans-serif;color:#24292e;letter-spacing:0.331px;left:270.50px;">2023-08-03 18:02:39</div>
<div style="top:659.66px;font:15px/1 'Liberation Sans',sans-serif;color:#24292e;letter-spacing:0.06px;left:470.30px;">lb HTTP Client</div>
<div style="top:659.73px;font:15.2px/1 'Liberation Sans',sans-serif;color:#24292e;left:95.5px;width:600px;text-align:right;">1</div>
<div style="left:15px;top:721px;width:680px;height:1px;background:#e3e4e4"></div>
<svg style="left:23.6px;top:698.0px;" width="7" height="11" viewBox="0 0 7 11" fill="none"><path d="M1 1 L6 5.5 L1 10" stroke="#1d2125" stroke-width="1.9" stroke-linecap="round" stroke-linejoin="round"/></svg>
<div style="top:695.66px;font:15px/1 'Liberation Sans',sans-serif;color:#1f62e0;letter-spacing:0.414px;-webkit-text-stroke:0.12px #1f62e0;left:70.50px;">208002e1ddad229</div>
<div style="top:695.66px;font:15.0px/1 'Liberation Sans',sans-serif;color:#24292e;letter-spacing:0.324px;left:270.50px;">2023-08-03 18:02:38</div>
<div style="top:695.66px;font:15px/1 'Liberation Sans',sans-serif;color:#24292e;letter-spacing:0.06px;left:470.30px;">lb HTTP Client</div>
<div style="top:695.73px;font:15.2px/1 'Liberation Sans',sans-serif;color:#24292e;left:95.5px;width:600px;text-align:right;">1</div>
<div style="left:15px;top:757px;width:680px;height:1px;background:#e3e4e4"></div>
<svg style="left:23.6px;top:734.0px;" width="7" height="11" viewBox="0 0 7 11" fill="none"><path d="M1 1 L6 5.5 L1 10" stroke="#1d2125" stroke-width="1.9" stroke-linecap="round" stroke-linejoin="round"/></svg>
<div style="top:731.66px;font:15px/1 'Liberation Sans',sans-serif;color:#1f62e0;letter-spacing:0.546px;-webkit-text-stroke:0.12px #1f62e0;left:70.50px;">1b88245952b0fc3</div>
<div style="top:731.66px;font:15.0px/1 'Liberation Sans',sans-serif;color:#24292e;letter-spacing:0.331px;left:270.50px;">2023-08-03 18:02:37</div>
<div style="top:731.66px;font:15px/1 'Liberation Sans',sans-serif;color:#24292e;letter-spacing:0.06px;left:470.30px;">lb HTTP Client</div>
<div style="top:731.73px;font:15.2px/1 'Liberation Sans',sans-serif;color:#24292e;left:95.5px;width:600px;text-align:right;">1</div>
<div style="left:15px;top:793px;width:680px;height:1px;background:#e3e4e4"></div>
<svg style="left:23.6px;top:770.0px;" width="7" height="11" viewBox="0 0 7 11" fill="none"><path d="M1 1 L6 5.5 L1 10" stroke="#1d2125" stroke-width="1.9" stroke-linecap="round" stroke-linejoin="round"/></svg>
<div style="top:767.66px;font:15px/1 'Liberation Sans',sans-serif;color:#1f62e0;letter-spacing:0.639px;-webkit-text-stroke:0.12px #1f62e0;left:70.50px;">6faf2d48eb45e59</div>
<div style="top:767.66px;font:15.0px/1 'Liberation Sans',sans-serif;color:#24292e;letter-spacing:0.331px;left:270.50px;">2023-08-03 18:02:37</div>
<div style="top:767.66px;font:15px/1 'Liberation Sans',sans-serif;color:#24292e;letter-spacing:0.06px;left:470.30px;">lb HTTP Client</div>
<div style="left:726px;top:310px;width:4px;height:200px;background:#d9dada;border-radius:2px"></div>
<div style="left:752px;top:88px;width:714px;height:249px;background:#fff;border:1px solid #e3e4e4;border-radius:3px"></div>
<div style="left:761px;top:97px;width:696px;height:31px;background:#f4f5f5;border-radius:2px"></div>
<svg style="left:772.7px;top:110.2px;" width="9" height="6" viewBox="0 0 9 6" fill="none"><path d="M1 1 L4.5 5 L8 1" stroke="#7d8185" stroke-width="1.4" stroke-linecap="round" stroke-linejoin="round"/></svg>
<div style="top:105.82px;font:bold 14px/1 'Liberation Sans',sans-serif;color:#1f62e0;left:801.66px;">A</div>
<svg style="left:1295px;top:105px;" width="16" height="16" viewBox="0 0 16 16" fill="none"><circle cx="8" cy="8" r="6.3" stroke="#5d6165" stroke-width="1.3"/><path d="M6.3 6.4 a1.8 1.8 0 1 1 2.5 1.6 c-0.6 0.3 -0.8 0.6 -0.8 1.2" stroke="#5d6165" stroke-width="1.2" stroke-linecap="round"/><circle cx="8" cy="11" r="0.75" fill="#5d6165"/></svg>
<svg style="left:1323px;top:105px;" width="16" height="16" viewBox="0 0 16 16" fill="none"><circle cx="8" cy="8" r="6.3" stroke="#5d6165" stroke-width="1.3"/><circle cx="8" cy="8" r="3.9" stroke="#5d6165" stroke-width="1.3"/></svg>
<svg style="left:1351px;top:105px;" width="16" height="16" viewBox="0 0 16 16" fill="none"><path d="M5.5 4.5 H3.8 a1 1 0 0 0 -1 1 V13 a1 1 0 0 0 1 1 H9.5 a1 1 0 0 0 1 -1 V11.5" stroke="#5d6165" stroke-width="1.3" stroke-linejoin="round"/><path d="M5.5 2.8 a1 1 0 0 1 1 -1 H10 L13.2 5 V10.5 a1 1 0 0 1 -1 1 H6.5 a1 1 0 0 1 -1 -1 Z" stroke="#5d6165" stroke-width="1.3" stroke-linejoin="round"/></svg>
<svg style="left:1379px;top:105px;" width="16" height="16" viewBox="0 0 16 16" fill="none"><path d="M1.6 8 C3.4 4.6 5.6 3.6 8 3.6 C10.4 3.6 12.6 4.6 14.4 8 C12.6 11.4 10.4 12.4 8 12.4 C5.6 12.4 3.4 11.4 1.6 8 Z" stroke="#5d6165" stroke-width="1.3"/><circle cx="8" cy="8" r="2" stroke="#5d6165" stroke-width="1.3"/></svg>
<svg style="left:1407px;top:105px;" width="16" height="16" viewBox="0 0 16 16" fill="none"><path d="M2.6 4.2 H13.4 M6 4 V2.4 H10 V4 M3.8 4.4 L4.5 13.6 H11.5 L12.2 4.4 M6.6 6.6 V11.6 M9.4 6.6 V11.6" stroke="#5d6165" stroke-width="1.3" stroke-linejoin="round"/></svg>
<div style="left:1436.0px;top:106.6px;width:2.8px;height:2.8px;background:#8a8e91;border-radius:50%"></div>
<div style="left:1436.0px;top:111.6px;width:2.8px;height:2.8px;background:#8a8e91;border-radius:50%"></div>
<div style="left:1436.0px;top:116.6px;width:2.8px;height:2.8px;background:#8a8e91;border-radius:50%"></div>
<div style="left:1441.1999999999998px;top:106.6px;width:2.8px;height:2.8px;background:#8a8e91;border-radius:50%"></div>
<div style="left:1441.1999999999998px;top:111.6px;width:2.8px;height:2.8px;background:#8a8e91;border-radius:50%"></div>
<div style="left:1441.1999999999998px;top:116.6px;width:2.8px;height:2.8px;background:#8a8e91;border-radius:50%"></div>
<div style="left:785px;top:133px;width:81px;height:32px;background:#f4f5f5;border-radius:2px"></div>
<div style="top:142.54px;font:13.2px/1 'Liberation Sans',sans-serif;color:#24292e;letter-spacing:0.136px;-webkit-text-stroke:0.22px #24292e;left:792.81px;">Query type</div>
<div style="left:870px;top:133px;width:512px;height:32px;background:#fff;border:1px solid #c9cbcc;border-radius:2px"></div>
<div style="left:952px;top:136px;width:90px;height:26px;background:#ececec;border-radius:2px"></div>
<div style="top:141.99px;font:14.5px/1 'Liberation Sans',sans-serif;color:#5d6165;letter-spacing:0.35px;left:889.13px;">Search</div>
<div style="top:142.09px;font:14.8px/1 'Liberation Sans',sans-serif;color:#24292e;letter-spacing:-0.2px;-webkit-text-stroke:0.25px #24292e;left:968.31px;">TraceQL</div>
<div style="top:141.99px;font:14.5px/1 'Liberation Sans',sans-serif;color:#5d6165;letter-spacing:-0.053px;left:1057.13px;">JSON File</div>
<div style="top:141.99px;font:14.5px/1 'Liberation Sans',sans-serif;color:#5d6165;letter-spacing:0.317px;left:1155.43px;">Service Graph</div>
<div style="top:141.99px;font:14.5px/1 'Liberation Sans',sans-serif;color:#5d6165;letter-spacing:0.322px;left:1283.13px;">Loki Search</div>
<div style="left:785px;top:169px;width:672px;height:32px;background:#f4f5f5;border-radius:2px 2px 0 0"></div>
<div style="top:178.28px;font:13.3px/1 'Liberation Sans',sans-serif;color:#24292e;letter-spacing:0.029px;-webkit-text-stroke:0.22px #24292e;left:792.50px;">Build complex queries using TraceQL to select a list of traces.</div>
<div style="top:178.28px;font:13.3px/1 'Liberation Sans',sans-serif;color:#24292e;letter-spacing:0.125px;-webkit-text-stroke:0.22px #24292e;left:848.7249999999999px;width:600px;text-align:right;">Documentation</div>
<div style="left:785px;top:201px;width:672px;height:31px;background:#fff;border:1px solid #c9cbcc;border-radius:0 0 2px 2px"></div>
<div style="top:209.65px;font:14.1px/1 'Liberation Mono',monospace;color:#3f9b3f;left:793.05px;">22a1f3c7aab7989</div>
<div style="left:785px;top:242px;width:672px;height:37px;background:#f4f5f5;border-radius:2px"></div>
<svg style="left:797.7px;top:256.5px;" width="6" height="9" viewBox="0 0 6 9" fill="none"><path d="M1 1 L5 4.5 L1 8" stroke="#3d4246" stroke-width="1.3" stroke-linecap="round" stroke-linejoin="round"/></svg>
<div style="top:254.58px;font:13.3px/1 'Liberation Sans',sans-serif;color:#24292e;letter-spacing:0.004px;-webkit-text-stroke:0.22px #24292e;left:816.90px;">Options</div>
<div style="top:254.61px;font:13.4px/1 'Liberation Sans',sans-serif;color:#5d6165;letter-spacing:0.028px;left:878.20px;">Limit: 20</div>
<div style="left:761px;top:296px;width:127px;height:32px;background:#eff0f0;border:1px solid #d8d9da;border-radius:2px"></div>
<svg style="left:779.3px;top:306.5px;" width="11" height="11" viewBox="0 0 11 11" fill="none"><path d="M5.5 0.5 V10.5 M0.5 5.5 H10.5" stroke="#24292e" stroke-width="1.6"/></svg>
<div style="top:304.26px;font:15.3px/1 'Liberation Sans',sans-serif;color:#24292e;letter-spacing:0.003px;-webkit-text-stroke:0.22px #24292e;left:800.48px;">Add query</div>
<div style="left:896px;top:296px;width:149px;height:32px;background:#eff0f0;border:1px solid #d8d9da;border-radius:2px"></div>
<svg style="left:912px;top:304px;" width="16" height="16" viewBox="0 0 16 16" fill="none"><path d="M3.3 4.6 A6 6 0 1 1 2.1 8.4" stroke="#24292e" stroke-width="1.5" stroke-linecap="round"/><path d="M2.2 2.6 V5.4 H5" stroke="#24292e" stroke-width="1.5" stroke-linecap="round" stroke-linejoin="round"/><path d="M8 5.6 V8.3 L9.8 9.4" stroke="#24292e" stroke-width="1.4" stroke-linecap="round"/></svg>
<div style="top:304.26px;font:15.3px/1 'Liberation Sans',sans-serif;color:#24292e;letter-spacing:0.146px;-webkit-text-stroke:0.22px #24292e;left:935.68px;">Query history</div>
<div style="left:1053px;top:296px;width:121px;height:32px;background:#eff0f0;border:1px solid #d8d9da;border-radius:2px"></div>
<svg style="left:1069px;top:304px;" width="16" height="16" viewBox="0 0 16 16" fill="none"><circle cx="8" cy="8" r="6.2" stroke="#24292e" stroke-width="1.4" stroke-dasharray="4.449828571428571 1.1124571428571428"/><path d="M8 7.4 V10.8" stroke="#24292e" stroke-width="1.4" stroke-linecap="round"/><circle cx="8" cy="5.3" r="0.8" fill="#24292e"/></svg>
<div style="top:304.26px;font:15.3px/1 'Liberation Sans',sans-serif;color:#24292e;letter-spacing:0.35px;-webkit-text-stroke:0.22px #24292e;left:1092.48px;">Inspector</div>
<div style="left:752px;top:358px;width:714px;height:40px;background:#fff;border:1px solid #e3e4e4;border-radius:3px"></div>
<svg style="left:765.9px;top:373.7px;" width="6.2" height="8.6" viewBox="0 0 6.2 8.6" fill="none"><path d="M1 1 L5.2 4.3 L1 7.6" stroke="#24292e" stroke-width="1.6" stroke-linecap="round" stroke-linejoin="round"/></svg>
<div style="top:370.33px;font:15.5px/1 'Liberation Sans',sans-serif;color:#24292e;letter-spacing:0.042px;left:784.27px;">Node graph</div>
<div style="left:752px;top:414px;width:714px;height:372px;background:#fff;border:1px solid #cfd1d2;border-radius:3px"></div>
<div style="top:428.00px;font:18.6px/1 'Liberation Sans',sans-serif;color:#24292e;letter-spacing:0.012px;left:767.18px;">lb: HTTP Client</div>
<div style="top:432.60px;font:12.5px/1 'Liberation Sans',sans-serif;color:#9a9c9e;letter-spacing:-0.085px;left:898.55px;">022a1f3c7aab7989</div>
<div style="left:761px;top:463px;width:696px;height:31px;background:#ececec;border-bottom:1px solid #dcdcdc"></div>
<div style="top:470.30px;font:15.4px/1 'Liberation Sans',sans-serif;color:#8e9092;letter-spacing:0.011px;left:767.78px;">Trace Start:</div>
<div style="top:470.30px;font:15.4px/1 'Liberation Sans',sans-serif;color:#24292e;letter-spacing:0.39px;-webkit-text-stroke:0.12px #24292e;left:850.48px;">2023-08-03 18:02</div>
<div style="top:470.30px;font:15.4px/1 'Liberation Sans',sans-serif;color:#8e9092;letter-spacing:0.146px;left:977.08px;">:41.208</div>
<div style="top:470.30px;font:15.4px/1 'Liberation Sans',sans-serif;color:#8e9092;letter-spacing:0.159px;left:1036.08px;">Duration:</div>
<div style="top:470.30px;font:15.4px/1 'Liberation Sans',sans-serif;color:#24292e;letter-spacing:0.05px;-webkit-text-stroke:0.12px #24292e;left:1100.78px;">22.84ms</div>
<div style="top:470.30px;font:15.4px/1 'Liberation Sans',sans-serif;color:#8e9092;letter-spacing:-0.075px;left:1168.88px;">Services:</div>
<div style="top:470.30px;font:15.4px/1 'Liberation Sans',sans-serif;color:#24292e;-webkit-text-stroke:0.12px #24292e;left:1234.38px;">3</div>
<div style="top:470.30px;font:15.4px/1 'Liberation Sans',sans-serif;color:#8e9092;letter-spacing:0.18px;left:1250.68px;">Depth:</div>
<div style="top:470.30px;font:15.4px/1 'Liberation Sans',sans-serif;color:#24292e;-webkit-text-stroke:0.12px #24292e;left:1299.68px;">6</div>
<div style="top:470.30px;font:15.4px/1 'Liberation Sans',sans-serif;color:#8e9092;letter-spacing:-0.086px;left:1316.78px;">Total Spans:</div>
<div style="top:470.30px;font:15.4px/1 'Liberation Sans',sans-serif;color:#24292e;-webkit-text-stroke:0.12px #24292e;left:1402.98px;">6</div>
<div style="left:1167px;top:416px;width:296px;height:47px;background:#fff;box-shadow:0 2px 6px rgba(0,0,0,0.12)"></div>
<div style="left:1175px;top:423px;width:200px;height:32px;background:#fff;border:1px solid #c9cbcc;border-radius:2px"></div>
<div style="top:431.23px;font:15.2px/1 'Liberation Sans',sans-serif;color:#9da0a2;letter-spacing:0.038px;left:1183.09px;">Find...</div>
<div style="left:1383px;top:423px;width:32px;height:32px;background:#f7f7f7;border-radius:2px"></div>
<div style="left:1423px;top:423px;width:32px;height:32px;background:#f7f7f7;border-radius:2px"></div>
<svg style="left:1393px;top:432px;" width="12" height="14" viewBox="0 0 12 14" fill="none"><path d="M6 2 V11 M2.5 7.5 L6 11 L9.5 7.5" stroke="#c4c6c7" stroke-width="1.4" stroke-linecap="round" stroke-linejoin="round"/></svg>
<svg style="left:1433px;top:432px;" width="12" height="14" viewBox="0 0 12 14" fill="none"><path d="M6 12 V3 M2.5 6.5 L6 3 L9.5 6.5" stroke="#c4c6c7" stroke-width="1.4" stroke-linecap="round" stroke-linejoin="round"/></svg>
<div style="top:496.55px;font:10.9px/1 'Liberation Sans',sans-serif;color:#55585b;letter-spacing:-0.1px;left:767.85px;">0μs</div>
<div style="top:496.55px;font:10.9px/1 'Liberation Sans',sans-serif;color:#55585b;letter-spacing:-0.39px;left:937.95px;">5.71ms</div>
<div style="top:496.55px;font:10.9px/1 'Liberation Sans',sans-serif;color:#55585b;letter-spacing:-0.275px;left:1108.35px;">11.42ms</div>
<div style="top:496.55px;font:10.9px/1 'Liberation Sans',sans-serif;color:#55585b;letter-spacing:-0.783px;left:1278.95px;">17.13ms</div>
<div style="top:496.55px;font:10.9px/1 'Liberation Sans',sans-serif;color:#55585b;letter-spacing:-0.025px;left:849.975px;width:600px;text-align:right;">22.84ms</div>
<div style="left:768px;top:508px;width:682px;height:60px;background:#fff;border-top:1px solid #8a8c8e;border-bottom:1px solid #777;border-left:2px solid #777;border-right:2px solid #777"></div>
<div style="left:939px;top:509px;width:1px;height:58px;background:#bcbebf"></div>
<div style="left:1109px;top:509px;width:1px;height:58px;background:#bcbebf"></div>
<div style="left:1279px;top:509px;width:1px;height:58px;background:#bcbebf"></div>
<div style="left:770px;top:509px;width:656px;height:5px;background:#7d6ba7"></div>
<div style="left:770px;top:518px;width:658px;height:6px;background:#7d6ba7"></div>
<div style="left:1116px;top:528px;width:333px;height:6px;background:#6c9e64"></div>
<div style="left:1119px;top:538px;width:284px;height:6px;background:#6c9e64"></div>
<div style="left:1119px;top:548px;width:297px;height:6px;background:#6c9e64"></div>
<div style="left:1185px;top:558px;width:6px;height:6px;background:#a93535"></div>
<div style="left:767px;top:509px;width:4px;height:20px;background:#555"></div>
<div style="left:1447px;top:509px;width:4px;height:20px;background:#555"></div>
<div style="left:761px;top:575px;width:696px;height:39px;background:#ececec;border-top:1px solid #d4d5d5;border-bottom:1px solid #d4d5d5"></div>
<div style="top:584.90px;font:18.6px/1 'Liberation Sans',sans-serif;color:#24292e;letter-spacing:0.131px;left:767.48px;">Se...</div>
<svg style="left:814.4px;top:590.1px;" width="12.8" height="8" viewBox="0 0 12.8 8" fill="none"><path d="M1 1 L6.4 7 L11.8 1" stroke="#24292e" stroke-width="1.7" stroke-linecap="round" stroke-linejoin="round"/></svg>
<svg style="left:845.0px;top:588.2px;" width="7.6" height="11.6" viewBox="0 0 7.6 11.6" fill="none"><path d="M1 1 L6.6 5.8 L1 10.6" stroke="#24292e" stroke-width="1.7" stroke-linecap="round" stroke-linejoin="round"/></svg>
<svg style="left:871px;top:587px;" width="12" height="14" viewBox="0 0 12 14" fill="none"><path d="M2 2.5 L6 6 L10 2.5 M2 7.5 L6 11 L10 7.5" stroke="#24292e" stroke-width="1.6" stroke-linecap="round" stroke-linejoin="round"/></svg>
<svg style="left:898px;top:588px;" width="14" height="12" viewBox="0 0 14 12" fill="none"><path d="M2 2 L5.5 6 L2 10 M7.5 2 L11 6 L7.5 10" stroke="#24292e" stroke-width="1.6" stroke-linecap="round" stroke-linejoin="round"/></svg>
<div style="left:925.5px;top:601px;width:1px;height:8px;background:#c9cacb"></div>
<div style="left:929px;top:601px;width:1px;height:8px;background:#c9cacb"></div>
<div style="top:587.46px;font:15px/1 'Liberation Sans',sans-serif;color:#24292e;letter-spacing:0.575px;left:937.90px;">0μs</div>
<div style="top:587.46px;font:15px/1 'Liberation Sans',sans-serif;color:#24292e;letter-spacing:-0.52px;left:1068.90px;">5.71ms</div>
<div style="top:587.46px;font:15px/1 'Liberation Sans',sans-serif;color:#24292e;letter-spacing:-0.221px;left:1198.60px;">11.42ms</div>
<div style="top:587.46px;font:15px/1 'Liberation Sans',sans-serif;color:#24292e;letter-spacing:-0.942px;left:1329.40px;">17.13ms</div>
<div style="top:587.46px;font:15px/1 'Liberation Sans',sans-serif;color:#24292e;letter-spacing:0.229px;left:853.229px;width:600px;text-align:right;">22.84ms</div>
<div style="left:935px;top:575px;width:1px;height:201px;background:#d8d9d9"></div>
<div style="left:1066px;top:575px;width:1px;height:201px;background:#d8d9d9"></div>
<div style="left:1196.5px;top:575px;width:1px;height:201px;background:#d8d9d9"></div>
<div style="left:1327px;top:575px;width:1px;height:201px;background:#d8d9d9"></div>
<div style="left:761px;top:776px;width:696px;height:1px;background:#d4d5d5"></div>
<div style="left:764.7px;top:614px;width:1px;height:162px;background:#d8d9d9"></div>
<div style="left:787.5px;top:641px;width:1px;height:135px;background:#d8d9d9"></div>
<div style="left:810.6px;top:668px;width:1px;height:108px;background:#d8d9d9"></div>
<div style="left:833.5px;top:695px;width:1px;height:81px;background:#d8d9d9"></div>
<div style="left:856.5px;top:722px;width:1px;height:54px;background:#d8d9d9"></div>
<div style="left:879.6px;top:749px;width:1px;height:27px;background:#d8d9d9"></div>
<svg style="left:768.7px;top:625.6px;" width="9" height="6" viewBox="0 0 9 6" fill="none"><path d="M1 1 L4.5 5 L8 1" stroke="#24292e" stroke-width="1.5" stroke-linecap="round" stroke-linejoin="round"/></svg>
<div style="left:784px;top:617.5px;width:4px;height:19.5px;background:#634d99"></div>
<div style="top:619.46px;font:15.3px/1 'Liberation Sans',sans-serif;color:#24292e;letter-spacing:1.775px;left:794.38px;width:110.70000000000005px;overflow:hidden;">lb</div>

<svg style="left:913px;top:620px;" width="18" height="18" viewBox="0 0 18 18" fill="none"><path d="M1.9 13.8 V3.5 a2 2 0 0 1 2 -2 H8.6 L13.3 6.6" stroke="#24292e" stroke-width="1.35" stroke-linejoin="round"/><path d="M8.6 1.6 V6.6 H13.3 Z" stroke="#24292e" stroke-width="1.2" stroke-linejoin="round"/><path d="M1.9 13.8 a2.2 2.2 0 0 0 2.2 2.2 H9.9" stroke="#24292e" stroke-width="1.35"/><text x="4.1" y="13.9" font-family="Liberation Sans" font-size="6.9" font-weight="bold" letter-spacing="-0.5" fill="#24292e">LOG</text></svg>
<svg style="left:791.7px;top:652.6px;" width="9" height="6" viewBox="0 0 9 6" fill="none"><path d="M1 1 L4.5 5 L8 1" stroke="#24292e" stroke-width="1.5" stroke-linecap="round" stroke-linejoin="round"/></svg>
<div style="left:807px;top:644.5px;width:4px;height:19.5px;background:#634d99"></div>
<div style="top:646.46px;font:15.3px/1 'Liberation Sans',sans-serif;color:#24292e;letter-spacing:1.775px;left:817.38px;width:87.70000000000005px;overflow:hidden;">lb</div>

<svg style="left:913px;top:647px;" width="18" height="18" viewBox="0 0 18 18" fill="none"><path d="M1.9 13.8 V3.5 a2 2 0 0 1 2 -2 H8.6 L13.3 6.6" stroke="#24292e" stroke-width="1.35" stroke-linejoin="round"/><path d="M8.6 1.6 V6.6 H13.3 Z" stroke="#24292e" stroke-width="1.2" stroke-linejoin="round"/><path d="M1.9 13.8 a2.2 2.2 0 0 0 2.2 2.2 H9.9" stroke="#24292e" stroke-width="1.35"/><text x="4.1" y="13.9" font-family="Liberation Sans" font-size="6.9" font-weight="bold" letter-spacing="-0.5" fill="#24292e">LOG</text></svg>
<svg style="left:814.7px;top:679.6px;" width="9" height="6" viewBox="0 0 9 6" fill="none"><path d="M1 1 L4.5 5 L8 1" stroke="#24292e" stroke-width="1.5" stroke-linecap="round" stroke-linejoin="round"/></svg>
<div style="left:830px;top:671.5px;width:4px;height:19.5px;background:#538a40"></div>
<div style="top:673.46px;font:15.3px/1 'Liberation Sans',sans-serif;color:#24292e;letter-spacing:0.938px;left:840.38px;width:64.70000000000005px;overflow:hidden;">app</div>

<svg style="left:913px;top:674px;" width="18" height="18" viewBox="0 0 18 18" fill="none"><path d="M1.9 13.8 V3.5 a2 2 0 0 1 2 -2 H8.6 L13.3 6.6" stroke="#24292e" stroke-width="1.35" stroke-linejoin="round"/><path d="M8.6 1.6 V6.6 H13.3 Z" stroke="#24292e" stroke-width="1.2" stroke-linejoin="round"/><path d="M1.9 13.8 a2.2 2.2 0 0 0 2.2 2.2 H9.9" stroke="#24292e" stroke-width="1.35"/><text x="4.1" y="13.9" font-family="Liberation Sans" font-size="6.9" font-weight="bold" letter-spacing="-0.5" fill="#24292e">LOG</text></svg>
<svg style="left:837.7px;top:706.6px;" width="9" height="6" viewBox="0 0 9 6" fill="none"><path d="M1 1 L4.5 5 L8 1" stroke="#24292e" stroke-width="1.5" stroke-linecap="round" stroke-linejoin="round"/></svg>
<div style="left:853px;top:698.5px;width:4px;height:19.5px;background:#538a40"></div>
<div style="top:700.46px;font:15.3px/1 'Liberation Sans',sans-serif;color:#24292e;letter-spacing:0.938px;left:863.38px;width:41.700000000000045px;overflow:hidden;">app</div>

<svg style="left:913px;top:701px;" width="18" height="18" viewBox="0 0 18 18" fill="none"><path d="M1.9 13.8 V3.5 a2 2 0 0 1 2 -2 H8.6 L13.3 6.6" stroke="#24292e" stroke-width="1.35" stroke-linejoin="round"/><path d="M8.6 1.6 V6.6 H13.3 Z" stroke="#24292e" stroke-width="1.2" stroke-linejoin="round"/><path d="M1.9 13.8 a2.2 2.2 0 0 0 2.2 2.2 H9.9" stroke="#24292e" stroke-width="1.35"/><text x="4.1" y="13.9" font-family="Liberation Sans" font-size="6.9" font-weight="bold" letter-spacing="-0.5" fill="#24292e">LOG</text></svg>
<svg style="left:860.7px;top:733.6px;" width="9" height="6" viewBox="0 0 9 6" fill="none"><path d="M1 1 L4.5 5 L8 1" stroke="#24292e" stroke-width="1.5" stroke-linecap="round" stroke-linejoin="round"/></svg>
<div style="left:876px;top:725.5px;width:4px;height:19.5px;background:#538a40"></div>
<div style="top:727.46px;font:15.3px/1 'Liberation Sans',sans-serif;color:#24292e;letter-spacing:0.938px;left:886.38px;width:18.700000000000045px;overflow:hidden;">app</div>

<svg style="left:913px;top:728px;" width="18" height="18" viewBox="0 0 18 18" fill="none"><path d="M1.9 13.8 V3.5 a2 2 0 0 1 2 -2 H8.6 L13.3 6.6" stroke="#24292e" stroke-width="1.35" stroke-linejoin="round"/><path d="M8.6 1.6 V6.6 H13.3 Z" stroke="#24292e" stroke-width="1.2" stroke-linejoin="round"/><path d="M1.9 13.8 a2.2 2.2 0 0 0 2.2 2.2 H9.9" stroke="#24292e" stroke-width="1.35"/><text x="4.1" y="13.9" font-family="Liberation Sans" font-size="6.9" font-weight="bold" letter-spacing="-0.5" fill="#24292e">LOG</text></svg>
<div style="left:899px;top:752.5px;width:4px;height:19.5px;background:#8a1212"></div>
<svg style="left:913px;top:755px;" width="18" height="18" viewBox="0 0 18 18" fill="none"><path d="M1.9 13.8 V3.5 a2 2 0 0 1 2 -2 H8.6 L13.3 6.6" stroke="#24292e" stroke-width="1.35" stroke-linejoin="round"/><path d="M8.6 1.6 V6.6 H13.3 Z" stroke="#24292e" stroke-width="1.2" stroke-linejoin="round"/><path d="M1.9 13.8 a2.2 2.2 0 0 0 2.2 2.2 H9.9" stroke="#24292e" stroke-width="1.35"/><text x="4.1" y="13.9" font-family="Liberation Sans" font-size="6.9" font-weight="bold" letter-spacing="-0.5" fill="#24292e">LOG</text></svg>
<div style="top:621.07px;font:13px/1 'Liberation Sans',sans-serif;color:#8e9092;letter-spacing:-0.118px;left:815.22px;width:90px;overflow:hidden;">HTTP Client (22.05ms)</div>
<div style="top:648.07px;font:13px/1 'Liberation Sans',sans-serif;color:#8e9092;letter-spacing:-0.5px;left:838.32px;width:66.89999999999998px;overflow:hidden;">HTTP GET (22.11ms)</div>
<div style="top:675.07px;font:13px/1 'Liberation Sans',sans-serif;color:#8e9092;letter-spacing:-0.708px;left:875.22px;width:30px;overflow:hidden;">HTTP GET</div>
<div style="top:702.07px;font:13px/1 'Liberation Sans',sans-serif;color:#8e9092;left:898.02px;width:7.2000000000000455px;overflow:hidden;">HTTP GET</div>
<div style="left:935.2px;top:622.0px;width:503.79999999999995px;height:10px;background:#634d99;border-radius:5.0px"></div>
<div style="left:936px;top:649.0px;width:503.5px;height:10px;background:#634d99;border-radius:5.0px"></div>
<div style="left:1201px;top:676.3px;width:256.5px;height:10px;background:#538a40;border-radius:5.0px"></div>
<div style="left:1203px;top:703.4px;width:216.5px;height:10px;background:#538a40;border-radius:5.0px"></div>
<div style="left:1203px;top:730.2px;width:227.5999999999999px;height:10px;background:#538a40;border-radius:5.0px"></div>
<div style="left:1254.3px;top:757.7px;width:3.6px;height:9.5px;background:#8a1212;border-radius:2px"></div>
<div style="left:936px;top:646px;width:2px;height:16px;background:#1e2226"></div>
<div style="left:963px;top:646px;width:1px;height:16px;background:#1e2226"></div>
<div style="left:970px;top:646px;width:1px;height:16px;background:#1e2226"></div>
<div style="left:972.3px;top:646px;width:1px;height:16px;background:#1e2226"></div>
<div style="left:1430px;top:646px;width:1px;height:16px;background:#1e2226"></div>
<div style="left:1440px;top:646px;width:1px;height:16px;background:#1e2226"></div>
<div style="left:1204.5px;top:727px;width:1px;height:16px;background:#1e2226"></div>
<div style="left:1206.5px;top:727px;width:1px;height:16px;background:#1e2226"></div>
<div style="left:1208.6px;top:727px;width:1px;height:16px;background:#1e2226"></div>
<div style="left:1246.5px;top:727px;width:2px;height:16px;background:#1e2226"></div>
<div style="left:1414px;top:727px;width:1px;height:16px;background:#1e2226"></div>
<div style="left:1431.5px;top:727px;width:1px;height:16px;background:#1e2226"></div>
<div style="top:622.00px;font:12.8px/1 'Liberation Sans',sans-serif;color:#9a9c9e;left:1444.03px;width:12.2px;overflow:hidden;">22.05ms</div>
<div style="top:649.00px;font:12.8px/1 'Liberation Sans',sans-serif;color:#9a9c9e;left:1446.23px;width:10px;overflow:hidden;">22.11ms</div>
<div style="top:676.00px;font:12.8px/1 'Liberation Sans',sans-serif;color:#9a9c9e;letter-spacing:-0.029px;left:594.771px;width:600px;text-align:right;">11.19ms</div>
<div style="top:703.00px;font:12.8px/1 'Liberation Sans',sans-serif;color:#9a9c9e;letter-spacing:-0.105px;left:596.895px;width:600px;text-align:right;">9.51ms</div>
<div style="top:730.00px;font:12.8px/1 'Liberation Sans',sans-serif;color:#9a9c9e;letter-spacing:-0.105px;left:596.895px;width:600px;text-align:right;">9.95ms</div>
<div style="top:756.80px;font:12.8px/1 'Liberation Sans',sans-serif;color:#9a9c9e;letter-spacing:-0.169px;left:647.4309999999999px;width:600px;text-align:right;">185μs</div>
</body></html>
